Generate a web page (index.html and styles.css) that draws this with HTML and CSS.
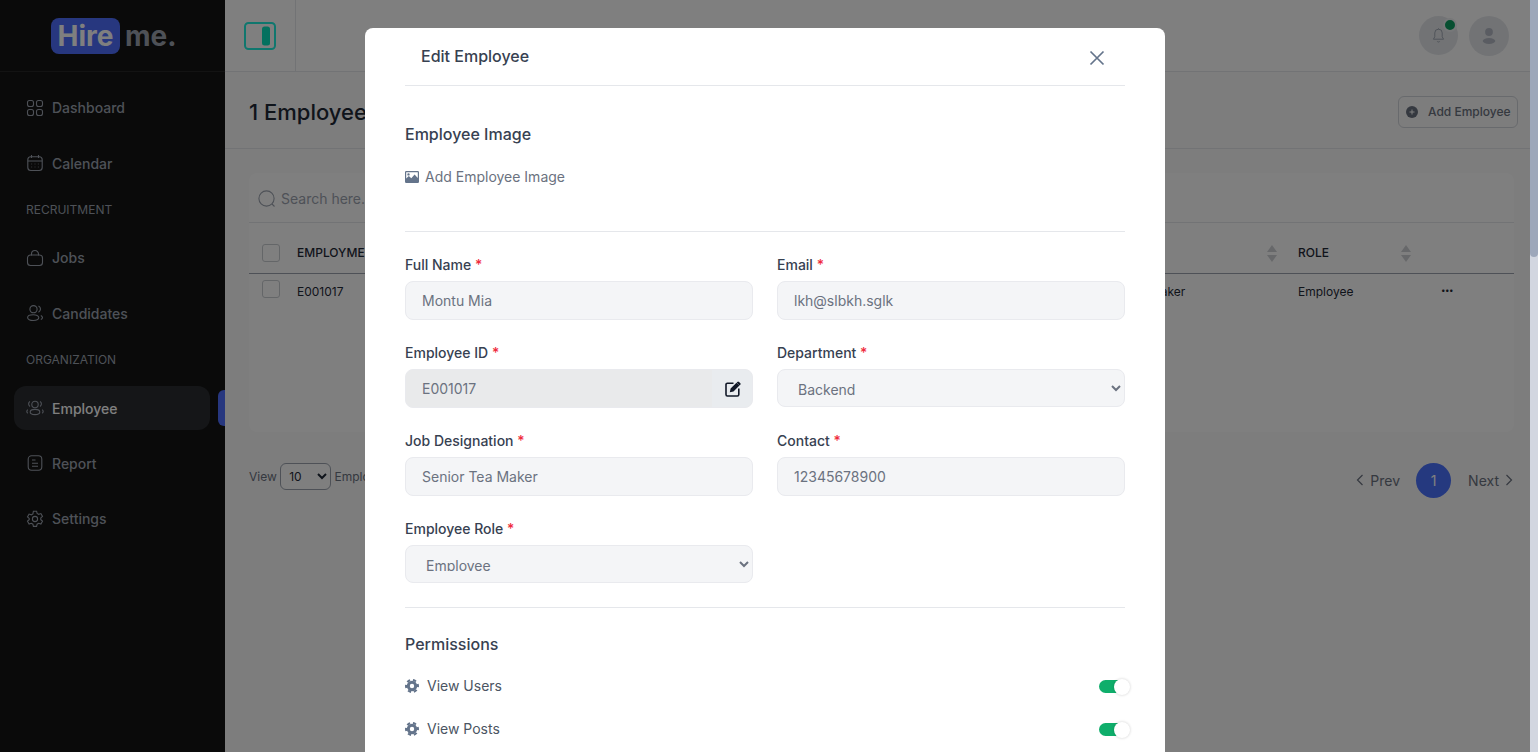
FILE: index.html
```html
<!DOCTYPE html>
<html lang="en">
<head>
<meta charset="utf-8">
<title>Edit Employee</title>
<link rel="stylesheet" href="styles.css">
</head>
<body>
<div class="stage">
  <div class="app">
    <aside class="sidebar">
      <div class="brand"><span class="brand-badge">Hire</span><span class="brand-rest">me.</span></div>
      <nav class="nav">
        <a class="nav-item"><svg class="nav-icon" viewBox="0 0 18 18"><rect x="1.5" y="1.5" width="6" height="6" rx="2"/><rect x="10.5" y="1.5" width="6" height="6" rx="2"/><rect x="1.5" y="10.5" width="6" height="6" rx="2"/><rect x="10.5" y="10.5" width="6" height="6" rx="2"/></svg>Dashboard</a>
        <a class="nav-item"><svg class="nav-icon" viewBox="0 0 18 18"><rect x="1.8" y="2.8" width="14.4" height="13.7" rx="3"/><path d="M1.8 7h14.400M5.500 1v3M12.500 1v3M5.500 10h.6M8.700 10h.6M11.900 10h.6M5.500 13h.6M8.700 13h.6M11.900 13h.6"/></svg>Calendar</a>
        <div class="nav-label">Recruitment</div>
        <a class="nav-item"><svg class="nav-icon" viewBox="0 0 18 18"><path d="M4.500 6h9a3 3 0 0 1 3 3v4.500a3 3 0 0 1-3 3h-9a3 3 0 0 1-3-3V9a3 3 0 0 1 3-3z"/><path d="M5.500 6.500V5a3.500 3.500 0 0 1 7 0v1.500"/></svg>Jobs</a>
        <a class="nav-item"><svg class="nav-icon" viewBox="0 0 18 18"><circle cx="7.500" cy="5.200" r="3.600"/><ellipse cx="7.200" cy="13.600" rx="5.600" ry="2.900"/><path d="M12.500 1.900a3.600 3.600 0 0 1 2 3.200 3.600 3.600 0 0 1-2 3.100M14.800 11.400a3 3 0 0 1 1.700 2.200 3 3 0 0 1-1.700 2"/></svg>Candidates</a>
        <div class="nav-label">Organization</div>
        <a class="nav-item nav-item-active"><svg class="nav-icon" viewBox="0 0 18 18"><circle cx="9" cy="5.500" r="3.200"/><ellipse cx="9" cy="13" rx="4.800" ry="2.600"/><path d="M4 2.600a2.800 2.800 0 0 0-1.400 2.500A2.800 2.800 0 0 0 4 7.400M14 2.600a2.800 2.800 0 0 1 1.400 2.500A2.800 2.800 0 0 1 14 7.400M1.800 10.600a2.600 2.600 0 0 0-1 1.900 2.600 2.600 0 0 0 1 1.800M16.200 10.600a2.600 2.600 0 0 1 1 1.900 2.600 2.600 0 0 1-1 1.800"/></svg>Employee<span class="nav-marker"></span></a>
        <a class="nav-item"><svg class="nav-icon" viewBox="0 0 18 18"><rect x="2.200" y="1.800" width="13.600" height="14.400" rx="3.400"/><path d="M6 6h3.500M6 9.200h6M6 12.300h6"/></svg>Report</a>
        <a class="nav-item"><svg class="nav-icon" viewBox="0 0 18 18"><path d="M7.400 1.200h3.200l.5 2.200 1.600.9 2.200-.7 1.600 2.800-1.700 1.500v1.800l1.700 1.500-1.600 2.800-2.200-.7-1.600.9-.5 2.200H7.400l-.5-2.200-1.600-.9-2.200.7-1.600-2.800 1.700-1.500V8.400L1.500 6.900l1.600-2.800 2.200.7 1.600-.9z"/><circle cx="9" cy="9" r="2.600"/></svg>Settings</a>
      </nav>
    </aside>
    <main class="main">
      <header class="topbar">
        <div class="toggle-cell">
          <svg class="toggle-icon" viewBox="0 0 32 28"><rect x="1" y="1" width="30" height="26" rx="3.500" fill="none" stroke="#1eeedd" stroke-width="2"/><rect x="18" y="4.500" width="8" height="19" rx="2.500" fill="#08e2be"/></svg>
        </div>
        <div class="top-actions">
          <div class="round-btn">
            <svg class="bell" viewBox="0 0 14 16"><path d="M7 1.200a4 4 0 0 0-4 4v4.200L1.500 12h11L11 9.400V5.200a4 4 0 0 0-4-4zM5.600 14.200a1.600 1.600 0 0 0 2.800 0M7 .3v1"/></svg>
            <span class="bell-dot"></span>
          </div>
          <div class="round-btn round-btn-user">
            <svg class="user" viewBox="0 0 14 16"><circle cx="7" cy="4" r="3.900"/><ellipse cx="7" cy="13" rx="6.300" ry="2.900"/></svg>
          </div>
        </div>
      </header>
      <div class="title-row">
        <h1 class="page-title">1 Employee</h1>
        <button class="add-btn"><svg class="add-icon" viewBox="0 0 12 12"><circle cx="6" cy="6" r="6" fill="#6b7280"/><path d="M6 3.500v5M3.500 6h5" stroke="#fff" stroke-width="1"/></svg>Add Employee</button>
      </div>
      <section class="content">
        <div class="card">
          <div class="search-row">
            <svg class="search-icon" viewBox="0 0 18 18"><circle cx="8.500" cy="8.500" r="7.600"/><path d="M14 14l2.500 2.500"/></svg>
            <span>Search here...</span>
          </div>
          <table class="table">
            <colgroup><col class="col-id"><col class="col-name"><col class="col-desig"><col class="col-role"><col></colgroup>
            <thead>
              <tr>
                <th><span class="check"></span>EMPLOYMENT ID</th>
                <th></th>
                <th><span class="sort"></span></th>
                <th>ROLE<span class="sort"></span></th>
                <th></th>
              </tr>
            </thead>
            <tbody>
              <tr>
                <td><span class="check"></span>E001017</td>
                <td></td>
                <td>Senior Tea Maker</td>
                <td>Employee</td>
                <td class="more">•••</td>
              </tr>
            </tbody>
          </table>
        </div>
        <div class="footer-row">
          <div class="view-group">View <select class="view-select"><option>10</option></select> Employees</div>
          <div class="pager">
            <span class="pager-link"><svg class="chev" viewBox="0 0 8 12"><path d="M6.500 1 1.500 6l5 5"/></svg>Prev</span>
            <span class="pager-num">1</span>
            <span class="pager-link">Next<svg class="chev" viewBox="0 0 8 12"><path d="M1.500 1l5 5-5 5"/></svg></span>
          </div>
        </div>
      </section>
    </main>
  </div>
  <div class="overlay">
    <div class="modal">
      <div class="modal-head">
        <h2 class="modal-title">Edit Employee</h2>
        <svg class="close" viewBox="0 0 16 16"><path d="M1.500 1.500l13 13M14.500 1.500l-13 13"/></svg>
      </div>
      <h3 class="section-title section-image">Employee Image</h3>
      <div class="image-link">
        <svg class="image-icon" viewBox="0 0 14 12"><path fill-rule="evenodd" d="M1.200 0h11.600A1.200 1.200 0 0 1 14 1.200v9.600a1.200 1.200 0 0 1-1.200 1.200H1.200A1.200 1.200 0 0 1 0 10.800V1.200A1.200 1.200 0 0 1 1.200 0zM1.200 1.200v6.300l2.600-2.500 2.500 2.300 3.300-3.800 3.200 3.600V1.200zM3.500 2.200a1.200 1.200 0 1 1 0 2.400 1.200 1.200 0 0 1 0-2.400z"/></svg>
        Add Employee Image
      </div>
      <form class="form-grid">
        <div class="field"><label class="label">Full Name <b>*</b></label><input class="input" value="Montu Mia"></div>
        <div class="field"><label class="label">Email <b>*</b></label><input class="input" value="lkh@slbkh.sglk"></div>
        <div class="field"><label class="label">Employee ID <b>*</b></label>
          <div class="id-box"><span class="id-value">E001017</span><span class="id-addon"><svg class="edit-icon" viewBox="0 0 16 16"><path d="M8.500 2.200H2.400A1.400 1.400 0 0 0 1 3.600v10A1.400 1.400 0 0 0 2.400 15h10a1.400 1.400 0 0 0 1.400-1.400V7.500" fill="none" stroke="#111827" stroke-width="1.600"/><path d="M4.800 11.300l.8-3.700 5.900-5.900 2.900 2.900-5.900 5.900zM12.300.9a1.200 1.200 0 0 1 1.700 0l1.200 1.200a1.200 1.200 0 0 1 0 1.700l-.6.600-2.900-2.900z" fill="#111827"/></svg></span></div>
        </div>
        <div class="field"><label class="label">Department <b>*</b></label><select class="input select"><option>Backend</option></select></div>
        <div class="field"><label class="label">Job Designation <b>*</b></label><input class="input" value="Senior Tea Maker"></div>
        <div class="field"><label class="label">Contact <b>*</b></label><input class="input" value="12345678900"></div>
        <div class="field"><label class="label">Employee Role <b>*</b></label><select class="input select"><option>Employee</option></select></div>
      </form>
      <h3 class="section-title section-perm">Permissions</h3>
      <div class="perm-row"><span class="perm-name"><svg class="gear" viewBox="0 0 14 14"><circle class="gear-body" cx="7" cy="7" r="3.700"/><circle class="gear-teeth" cx="7" cy="7" r="6" pathLength="32" stroke-dashoffset="1.800"/></svg>View Users</span><span class="switch"><span class="knob"></span></span></div>
      <div class="perm-row"><span class="perm-name"><svg class="gear" viewBox="0 0 14 14"><circle class="gear-body" cx="7" cy="7" r="3.700"/><circle class="gear-teeth" cx="7" cy="7" r="6" pathLength="32" stroke-dashoffset="1.800"/></svg>View Posts</span><span class="switch"><span class="knob"></span></span></div>
    </div>
  </div>
</div>
<div class="scrollbar"><div class="scroll-thumb"></div></div>
</body>
</html>
```

FILE: styles.css
```css
* { box-sizing: border-box; }
html, body { height: 100%; margin: 0; overflow: hidden; }
body {
  display: flex;
  font-family: Inter, "Liberation Sans", sans-serif;
  color: #1f2937;
  background: #fafafa;
}
.stage { position: relative; flex: 1; min-width: 0; height: 752px; overflow: hidden; }
.scrollbar { width: 8px; height: 752px; background: #d2d6e0; }
.scroll-thumb { height: 257px; background: #9da7ba; border-radius: 0 0 4px 4px; }

/* app underneath */
.app { display: flex; height: 100%; }
.sidebar { width: 225px; flex: none; background: #141414; color: #9ca3af; }
.brand {
  height: 72px; border-bottom: 1px solid #262626;
  display: flex; align-items: center; gap: 5px;
  padding-left: 51px;
}
.brand-badge {
  background: #4f6fff; color: #fff; font-size: 28px; font-weight: 700;
  border-radius: 8px; height: 36px; width: 69px; line-height: 36px; text-align: center;
}
.brand-rest { color: #9ca3af; font-size: 28px; font-weight: 700; }
.nav { display: flex; flex-direction: column; gap: 12px; padding: 14px 0 0 14px; }
.nav-item {
  position: relative; display: flex; align-items: center; gap: 8px;
  width: 196px; height: 43.5px; padding-left: 12px; border-radius: 12px;
  font-size: 14px; font-weight: 500; color: #9ca3af;
}
.nav-item-active { background: #2a2c30; color: #fff; height: 44px; margin-top: .5px; margin-bottom: -.5px; }
.nav-marker {
  position: absolute; left: 204px; top: 4px; width: 7px; height: 36px;
  background: #4f6fff; border-radius: 6px 0 0 6px;
}
.nav-icon { width: 18px; height: 18px; flex: none; fill: none; stroke: currentColor; stroke-width: 1.1; color: #9ca3af; }
.nav-label {
  height: 26.75px; padding: 6px 0 0 12px;
  font-size: 12px; line-height: 14px; color: #9ca3af; text-transform: uppercase;
}
.main { flex: 1; min-width: 0; display: flex; flex-direction: column; }
.topbar {
  height: 72px; flex: none; background: #fff; border-bottom: 1px solid #e5e7eb;
  display: flex; align-items: stretch; justify-content: space-between;
}
.toggle-cell { width: 71px; border-right: 1px solid #e5e7eb; display: flex; align-items: center; padding-left: 19px; }
.toggle-icon { width: 32px; height: 28px; display: block; }
.top-actions { display: flex; gap: 11px; padding: 16px 21px 0 0; }
.round-btn {
  position: relative; width: 39px; height: 39px; border-radius: 50%; background: #e5e7eb;
  display: flex; align-items: center; justify-content: center;
}
.round-btn-user { width: 40px; height: 40px; }
.bell { width: 13px; height: 15px; fill: none; stroke: #9ca3af; stroke-width: 1; }
.bell-dot {
  position: absolute; top: 2px; right: 1px; width: 14px; height: 14px; border-radius: 50%;
  background: #0e9f63; border: 2px solid #eef0f2;
}
.user { width: 14px; height: 16px; fill: #b4b9c4; }
.title-row {
  height: 77px; flex: none; border-bottom: 1px solid #e5e7eb;
  display: flex; align-items: center; justify-content: space-between;
  padding: 4px 12px 0 24px;
}
.page-title { margin: 0; font-size: 22px; font-weight: 500; color: #1f2937; white-space: nowrap; }
.add-btn {
  display: flex; align-items: center; gap: 10px;
  width: 120px; height: 32px; margin-top: -1px; padding: 0 0 0 7px;
  font: 500 12px Inter, sans-serif; color: #6b7280;
  background: transparent; border: 1px solid #d1d5db; border-radius: 6px; white-space: nowrap;
}
.add-icon { width: 12px; height: 12px; flex: none; }
.content { flex: 1; padding: 24px 16px 0 24px; }
.card { height: 259px; background: #fff; border-radius: 8px; width: 1265px; }
.search-row {
  height: 50px; display: flex; align-items: center; gap: 5px; padding: 2px 9px 0;
  font-size: 14px; color: #9ca3af; border-bottom: 1px solid #e5e7eb;
}
.search-icon { width: 18px; height: 18px; fill: none; stroke: #9ca3af; stroke-width: 1.1; }
.table { width: 100%; border-collapse: collapse; table-layout: fixed; font-size: 12px; color: #1f2937; }
.col-id { width: 200px; }
.col-name { width: 637px; }
.col-desig { width: 212px; }
.col-role { width: 134px; }
.table th {
  position: relative; height: 50px; padding: 10px 0 0 48px; text-align: left; font-weight: 500;
  border-bottom: 1px solid #9ca3af; white-space: nowrap;
}
.table th:not(:first-child) { padding-left: 0; }
.table td:not(:first-child) { padding-left: 0; }
.table td { position: relative; height: 36px; padding: 0 0 0 48px; }
.check {
  position: absolute; left: 13px; width: 18px; height: 18px;
  border: 1px solid #c9ccd1; border-radius: 3px; background: #fff;
}
.table th .check { top: 21px; }
.table td .check { top: 6px; }
.sort { position: absolute; right: 21px; top: 22px; width: 10px; height: 17px; }
.sort::before, .sort::after {
  content: ""; position: absolute; left: 0;
  border-left: 5px solid transparent; border-right: 5px solid transparent;
}
.sort::before { top: 0; border-bottom: 7px solid #cfd1d5; }
.sort::after { bottom: 0; border-top: 7px solid #cfd1d5; }
.table td.more { padding: 0 0 2px 9px; font-size: 8px; letter-spacing: -.5px; }
.footer-row { display: flex; align-items: center; justify-content: space-between; margin-top: 30px; height: 36px; }
.view-group { margin-top: -8px; font-size: 12px; color: #6b7280; }
.view-select {
  width: 51px; height: 27px; padding-left: 4px; font: 12px Inter, sans-serif;
  border: 1px solid #9ca3af; border-radius: 6px; background: #fff; color: #1f2937;
}
.pager { display: flex; align-items: center; gap: 17px; margin-right: 1px; font-size: 14px; color: #6b7280; }
.pager-link { display: flex; align-items: center; gap: 6px; }
.pager-link:first-child { margin-right: -1px; }
.pager-num {
  width: 35px; height: 35px; border-radius: 50%; background: #4a72ff; color: #fff;
  display: flex; align-items: center; justify-content: center;
}
.chev { width: 8px; height: 12px; fill: none; stroke: #6b7280; stroke-width: 1.2; }

/* overlay and modal */
.overlay { position: absolute; inset: 0; background: rgba(0, 0, 0, .5); overflow: hidden; }
.modal {
  width: 800px; min-height: 800px; margin: 28px 0 0 365px; padding: 0 40px;
  background: #fff; border-radius: 8px 8px 0 0;
}
.modal-head {
  height: 58px; padding: 0 16px; border-bottom: 1px solid #e5e7eb;
  display: flex; align-items: center; justify-content: space-between;
}
.modal-title { margin: 0 0 1px; font-size: 16px; font-weight: 500; line-height: 24px; color: #374151; }
.close { width: 16px; height: 16px; margin: 2px 4px 0 0; fill: none; stroke: #64748b; stroke-width: 1.7; }
.section-title { margin: 0; font-size: 16px; font-weight: 500; line-height: 24px; color: #374151; }
.section-image { padding-top: 36px; }
.image-link {
  display: flex; align-items: center; gap: 6px; height: 86px; padding: 0 0 24px;
  border-bottom: 1px solid #e5e7eb;
  font-size: 14px; color: #6b7280;
}
.image-icon { width: 14px; height: 12px; fill: #64748b; }
.form-grid {
  display: grid; grid-template-columns: 348px 348px; column-gap: 24px; row-gap: 20px;
  padding: 22px 0 21px; border-bottom: 1px solid #e5e7eb;
}
.field { display: flex; flex-direction: column; height: 68px; }
.label { height: 27px; font-size: 14px; font-weight: 500; line-height: 21px; color: #374151; }
.label b { font-weight: 500; color: #ef2b3c; }
.input {
  width: 100%; height: 39px; padding: 0 16px; font: 14px Inter, sans-serif; color: #6b7280;
  background: #f4f5f7; border: 1px solid #e9eaee; border-radius: 8px; outline: none;
}
.select { height: 38px; padding: 10px 16px 11px; }
.id-box { display: flex; height: 39px; background: #e9eaeb; border: 1px solid #e9eaee; border-radius: 8px; overflow: hidden; }
.id-value { flex: 1; padding-left: 16px; font-size: 14px; line-height: 37px; color: #6b7280; }
.id-addon { width: 40px; background: #e9ecef; display: flex; align-items: center; justify-content: center; }
.edit-icon { width: 16px; height: 16px; margin-left: 1px; }
.section-perm { padding-top: 24px; }
.perm-row { display: flex; align-items: center; justify-content: space-between; height: 43px; }
.section-perm + .perm-row { margin-top: 8px; }
.perm-name { display: flex; align-items: center; gap: 8px; font-size: 14px; color: #4b5563; }
.gear { width: 14px; height: 14px; overflow: visible; }
.gear-body { fill: none; stroke: #64748b; stroke-width: 3; }
.gear-teeth { fill: none; stroke: #64748b; stroke-width: 2; stroke-dasharray: 2.8 2.533; }
.switch { position: relative; width: 26px; height: 13px; margin-top: 2px; background: #0fae6b; border-radius: 7px; }
.knob {
  position: absolute; left: 15px; top: -1px; width: 16px; height: 16px; border-radius: 50%;
  background: #fff; box-shadow: 0 0 3px rgba(0, 0, 0, .2);
}
```
